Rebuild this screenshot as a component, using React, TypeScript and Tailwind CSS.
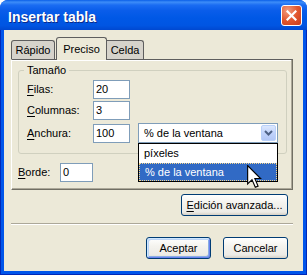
import React from "react";

function U({ children }: { children: React.ReactNode }) {
  return <span className="underline underline-offset-[2px] decoration-1">{children}</span>;
}

function Field({ w, children }: { w: string; children: React.ReactNode }) {
  return (
    <div className={`${w} h-[19px] border border-[#7F9DB9] bg-white flex items-center pl-[2px]`}>
      {children}
    </div>
  );
}

function XPButton({ w, children, def }: { w: string; children: React.ReactNode; def?: boolean }) {
  return (
    <div
      className={`${w} h-[22px] rounded-[3px] border border-[#003C74] flex items-center justify-center bg-[linear-gradient(180deg,#FFFFFF_0%,#F4F3EE_40%,#ECEBE6_85%,#D6D0C5_100%)] ${
        def
          ? "shadow-[inset_1px_1px_0_#CEE7FF,inset_-1px_-1px_0_#6982EE,inset_2px_2px_0_#BCD4F6,inset_-2px_-2px_0_#89ADE4]"
          : ""
      }`}
    >
      {children}
    </div>
  );
}

export default function App() {
  return (
    <div className="w-[307px] h-[275px] bg-white relative font-['Liberation_Sans',Arial,sans-serif] text-[11px] leading-[13px] text-black">
      <div className="w-full h-full flex flex-col rounded-t-[8px] overflow-hidden bg-[#0055EA]">
        {/* Title bar */}
        <div className="h-[30px] flex items-start pl-[8px] pr-[5px] bg-[linear-gradient(180deg,#0A5FE8_0%,#3D8DF8_7%,#1A6CF2_17%,#0A5DEA_35%,#0058E6_60%,#0055E2_85%,#0048D0_100%)]">
          <div className="flex-1 mt-[10px] text-[14px] leading-[14px] font-bold text-white [text-shadow:1px_1px_0_#0A2A8A]">
            Insertar tabla
          </div>
          <div className="mt-[5px] w-[21px] h-[21px] rounded-[3px] border border-white flex items-center justify-center bg-[radial-gradient(circle_at_30%_25%,#F29C7E_0%,#E2582F_50%,#C83B1C_100%)]">
            <svg width="11" height="11" viewBox="0 0 11 11">
              <path d="M1.5 1.5 L9.5 9.5 M9.5 1.5 L1.5 9.5" stroke="white" strokeWidth="2.2" strokeLinecap="square" />
            </svg>
          </div>
        </div>

        {/* Frame + body */}
        <div className="flex-1 flex flex-col border-x border-b border-[#0028B8] px-[3px] pb-[3px]">
          <div className="flex-1 bg-[#ECE9D8] pt-[7px] pl-[7px] flex flex-col">
            <div className="w-[282px] flex flex-col">
              {/* Tabs */}
              <div className="flex items-end h-[22px] relative z-10">
                <div className="w-[44px] h-[19px] border border-b-0 border-[#5E5E5E] rounded-t-[3px] bg-[#D6D3CB] flex items-center justify-center">
                  Rápido
                </div>
                <div className="ml-[1px] w-[51px] h-[23px] -mb-px border border-b-0 border-[#5E5E5E] rounded-t-[3px] bg-[#ECE9D8] flex items-center justify-center">
                  Preciso
                </div>
                <div className="w-[37px] h-[19px] border border-b-0 border-l-0 border-[#5E5E5E] rounded-tr-[3px] bg-[#D6D3CB] flex items-center justify-center">
                  Celda
                </div>
              </div>

              {/* Tab panel */}
              <div className="w-[282px] h-[131px] border border-t-[#5E5E5E] border-l-white border-r-[#716F64] border-b-[#716F64] shadow-[inset_-1px_-1px_0_#ACA899,inset_0_1px_0_#FFFFFF] pt-[4px] pl-[6px] flex flex-col">
                <fieldset className="w-[269px] h-[90px] border border-[#D0D0BF] rounded-[3px]">
                  <legend className="ml-[5px] px-[3px] leading-[13px]">Tamaño</legend>
                  <div className="pl-[8px] pt-[3px] flex flex-col gap-[2px]">
                    <div className="h-[19px] flex items-center">
                      <div className="w-[66px]">
                        <U>F</U>ilas:
                      </div>
                      <Field w="w-[37px]">20</Field>
                    </div>
                    <div className="h-[19px] flex items-center">
                      <div className="w-[66px]">
                        <U>C</U>olumnas:
                      </div>
                      <Field w="w-[37px]">3</Field>
                    </div>
                    <div className="h-[20px] mt-[1px] flex items-center">
                      <div className="w-[66px]">
                        <U>A</U>nchura:
                      </div>
                      <Field w="w-[37px]">100</Field>
                      <div className="ml-[8px] relative z-20">
                        <div className="w-[140px] h-[20px] border border-[#7F9DB9] bg-white flex items-center pl-[5px]">
                          <div className="flex-1">% de la ventana</div>
                          <div className="w-[15px] h-[16px] mr-[1px] rounded-[2px] border border-[#B9D1FA] bg-[linear-gradient(180deg,#DCE8FE_0%,#C1D3FB_50%,#B2C7F6_100%)] flex items-center justify-center">
                            <svg width="9" height="6" viewBox="0 0 9 6">
                              <path d="M1 1 L4.5 4.5 L8 1" stroke="#4D6185" strokeWidth="2" fill="none" />
                            </svg>
                          </div>
                        </div>
                        <div className="absolute left-0 top-full w-[140px] border border-black bg-white flex flex-col">
                          <div className="h-[19px] flex items-center pl-[5px]">píxeles</div>
                          <div className="h-[18px] flex items-center pl-[5px] bg-[#316AC5] text-white border border-dotted border-[#F5D58A]">
                            % de la ventana
                          </div>
                        </div>
                      </div>
                    </div>
                  </div>
                </fieldset>

                <div className="mt-[9px] h-[19px] flex items-center">
                  <div className="w-[42px]">
                    <U>B</U>orde:
                  </div>
                  <Field w="w-[33px]">0</Field>
                </div>
              </div>

              {/* Edición avanzada */}
              <div className="mt-[4px] flex justify-end pr-[5px]">
                <XPButton w="w-[107px]">
                  <span>
                    <U>E</U>dición avanzada...
                  </span>
                </XPButton>
              </div>

              {/* Separator */}
              <div className="mt-[7px] w-full border-t border-t-[#ACA899] border-b border-b-white" />

              {/* Bottom buttons */}
              <div className="mt-[12px] flex justify-end gap-[12px] pr-[5px]">
                <XPButton w="w-[65px]" def>
                  Aceptar
                </XPButton>
                <XPButton w="w-[65px]">Cancelar</XPButton>
              </div>
            </div>
          </div>
        </div>
      </div>

      {/* Mouse cursor */}
      <svg className="absolute z-30 left-[247px] top-[165px]" width="15" height="24" viewBox="0 0 13 21">
        <path d="M0.5 0.5 L0.5 16.5 L4.3 12.8 L7.2 19.5 L9.6 18.5 L6.8 11.8 L11.8 11.8 Z" fill="white" stroke="black" strokeWidth="1" strokeLinejoin="miter" />
      </svg>
    </div>
  );
}
